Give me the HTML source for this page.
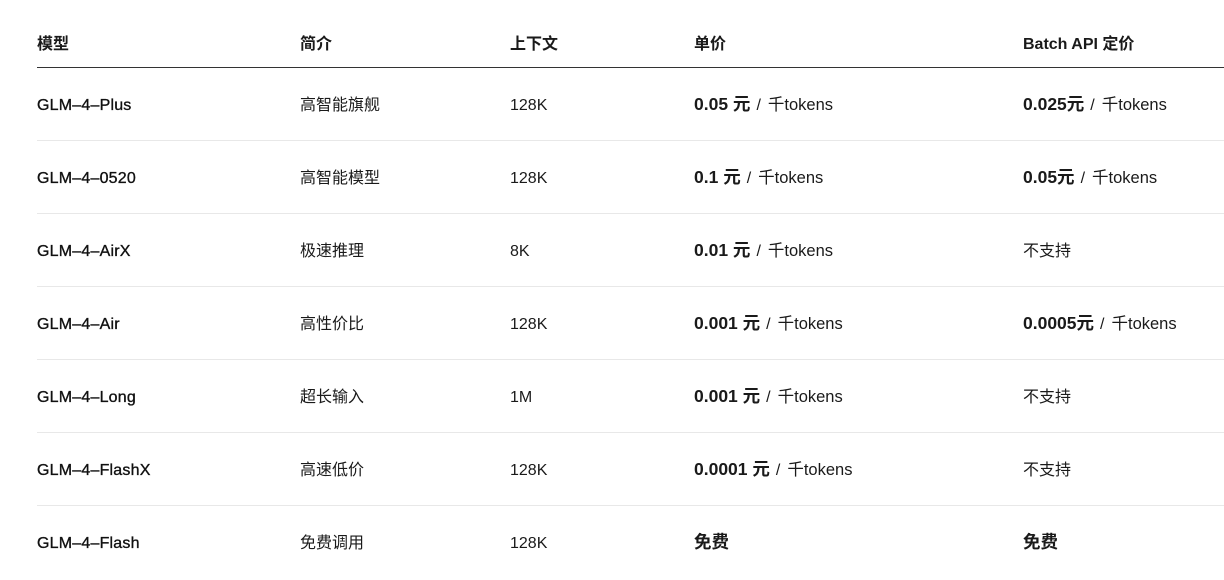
<!DOCTYPE html>
<html><head><meta charset="utf-8"><style>
body{margin:0;width:1224px;height:578px;background:#fff;overflow:hidden;font-family:"Liberation Sans","Noto Sans CJK SC",sans-serif;color:#1a1a1a;font-size:16px}
.t{position:absolute;left:37px;right:0;top:1px}
.r{position:relative;height:72px;border-bottom:1px solid #e8e8e8}
.h{height:66px;border-bottom:1px solid #333;font-weight:bold}
.c{position:absolute;top:2px;line-height:72px;white-space:nowrap}
.h .c{line-height:86px;top:1px}
.c1{left:0}.c2{left:263px}.c3{left:473px}.c4{left:657px}.c5{left:986px}
.m{letter-spacing:0.2px;color:#111;-webkit-text-stroke:0.35px #111}
b{font-weight:bold;font-size:17.5px;line-height:0}
i{font-style:normal;margin:0 7px 0 6px}
.k{font-size:16.5px;line-height:0}
</style></head><body><div class="t">
<div class="r h"><span class="c c1">模型</span><span class="c c2">简介</span><span class="c c3">上下文</span><span class="c c4">单价</span><span class="c c5">Batch API 定价</span></div>
<div class="r"><span class="c c1 m">GLM–4–Plus</span><span class="c c2">高智能旗舰</span><span class="c c3">128K</span><span class="c c4"><b>0.05 元</b><i>/</i><span class="k">千tokens</span></span><span class="c c5"><b>0.025元</b><i>/</i><span class="k">千tokens</span></span></div>
<div class="r"><span class="c c1 m">GLM–4–0520</span><span class="c c2">高智能模型</span><span class="c c3">128K</span><span class="c c4"><b>0.1 元</b><i>/</i><span class="k">千tokens</span></span><span class="c c5"><b>0.05元</b><i>/</i><span class="k">千tokens</span></span></div>
<div class="r"><span class="c c1 m">GLM–4–AirX</span><span class="c c2">极速推理</span><span class="c c3">8K</span><span class="c c4"><b>0.01 元</b><i>/</i><span class="k">千tokens</span></span><span class="c c5">不支持</span></div>
<div class="r"><span class="c c1 m">GLM–4–Air</span><span class="c c2">高性价比</span><span class="c c3">128K</span><span class="c c4"><b>0.001 元</b><i>/</i><span class="k">千tokens</span></span><span class="c c5"><b>0.0005元</b><i>/</i><span class="k">千tokens</span></span></div>
<div class="r"><span class="c c1 m">GLM–4–Long</span><span class="c c2">超长输入</span><span class="c c3">1M</span><span class="c c4"><b>0.001 元</b><i>/</i><span class="k">千tokens</span></span><span class="c c5">不支持</span></div>
<div class="r"><span class="c c1 m">GLM–4–FlashX</span><span class="c c2">高速低价</span><span class="c c3">128K</span><span class="c c4"><b>0.0001 元</b><i>/</i><span class="k">千tokens</span></span><span class="c c5">不支持</span></div>
<div class="r" style="border-bottom:none"><span class="c c1 m">GLM–4–Flash</span><span class="c c2">免费调用</span><span class="c c3">128K</span><span class="c c4"><b>免费</b></span><span class="c c5"><b>免费</b></span></div>
</div></body></html>
